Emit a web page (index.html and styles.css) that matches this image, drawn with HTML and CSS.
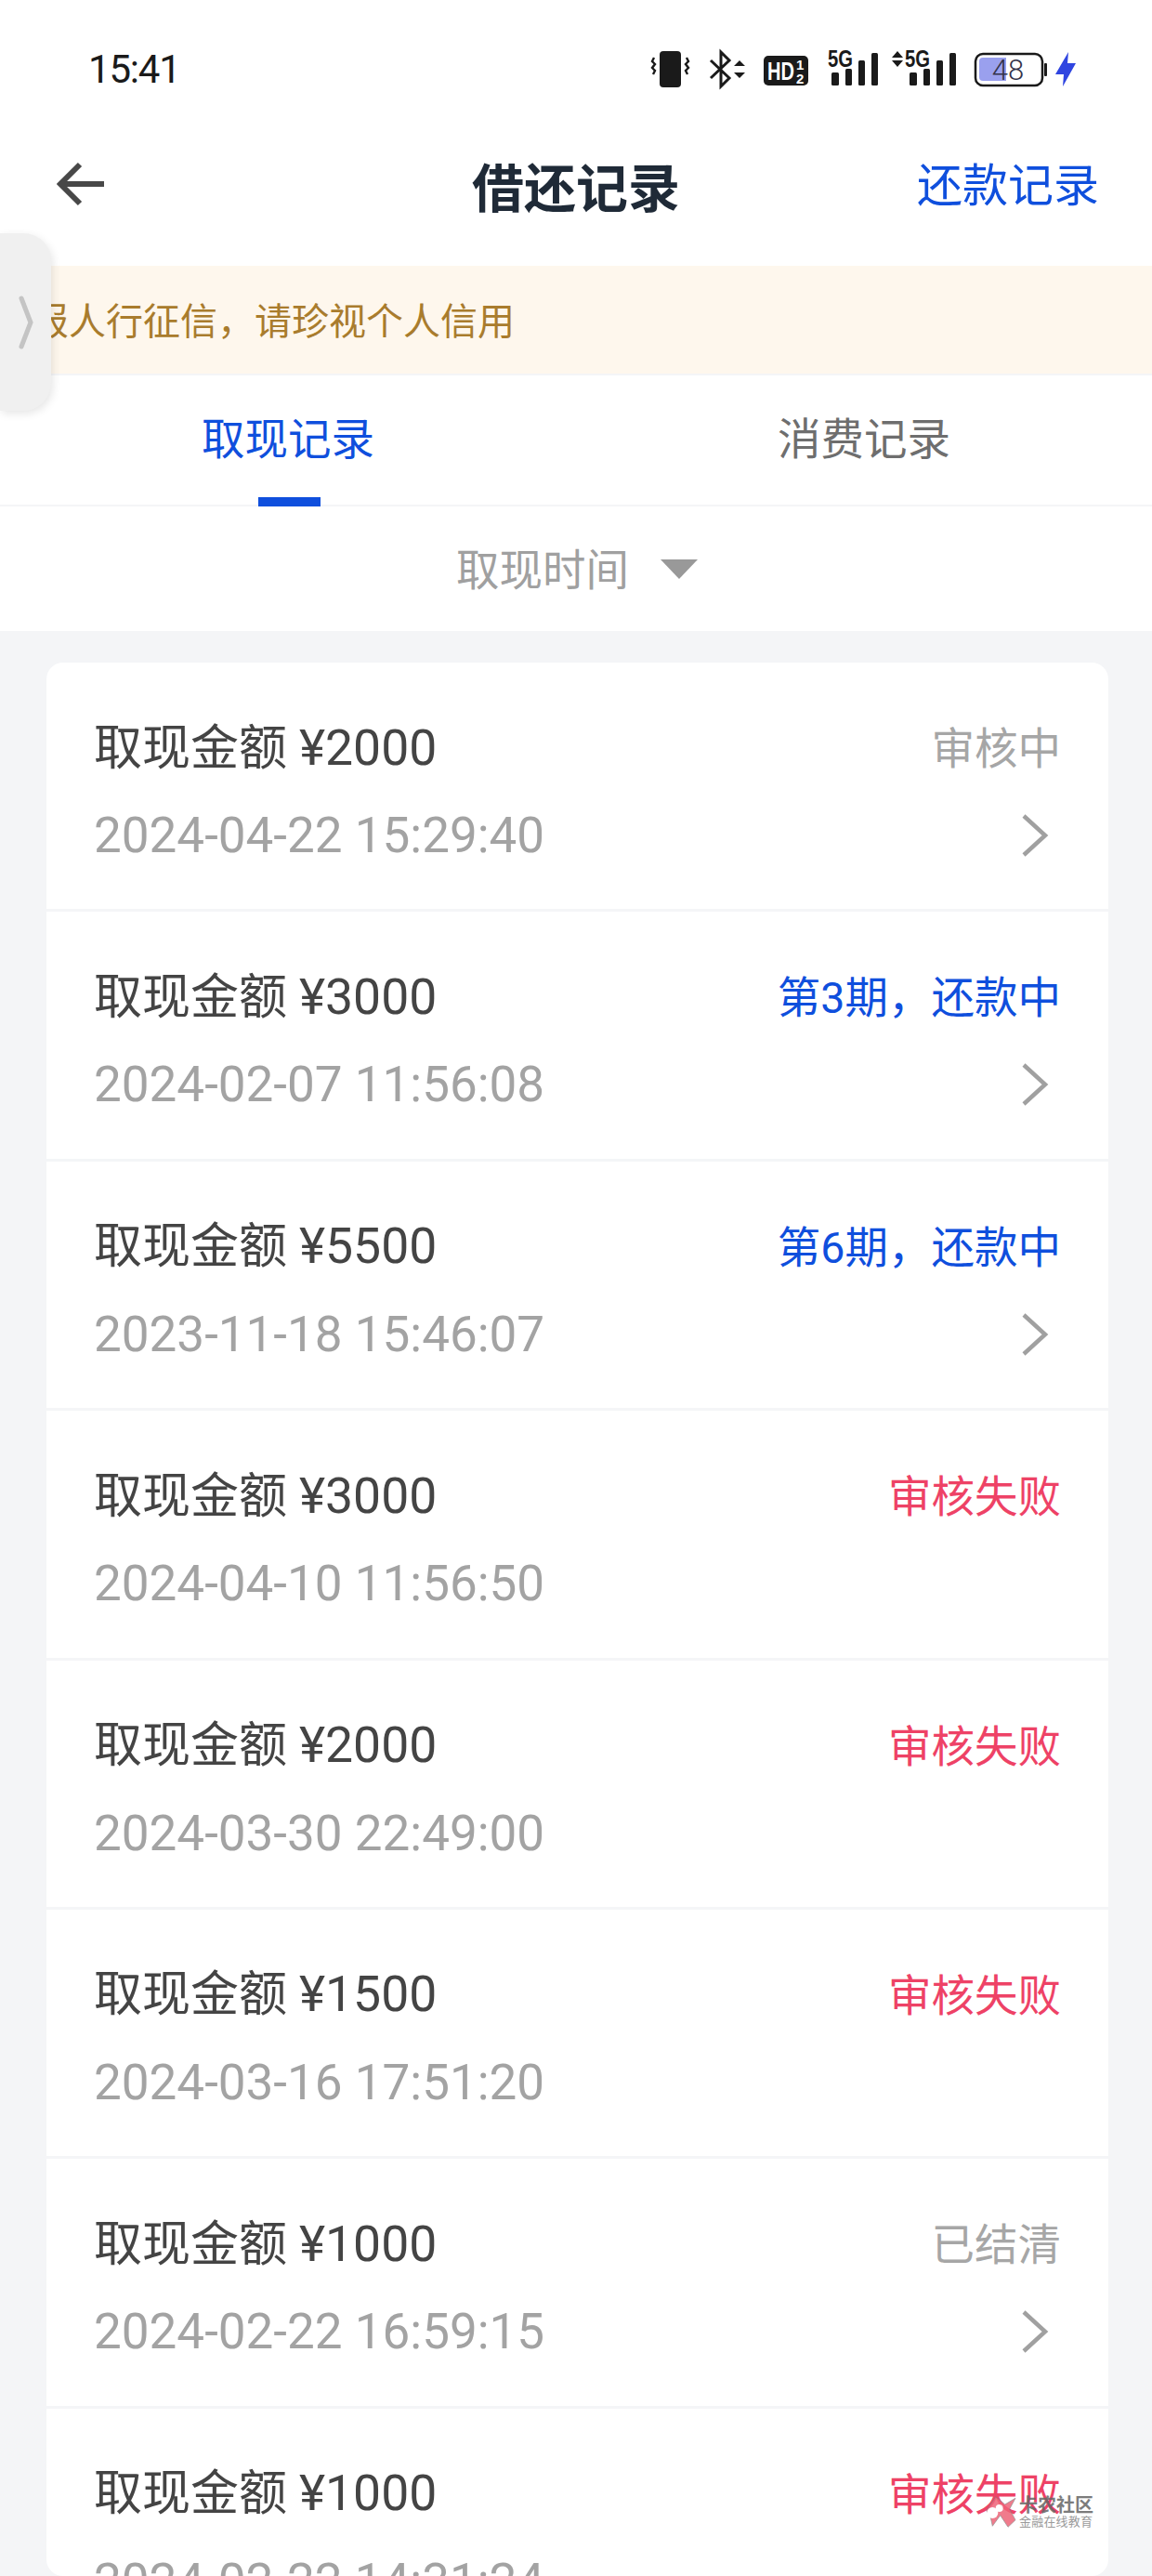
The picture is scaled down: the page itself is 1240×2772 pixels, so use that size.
FILE: index.html
```html
<!DOCTYPE html>
<html lang="zh-CN">
<head>
    <meta charset="UTF-8">
    <meta name="viewport" content="width=device-width, initial-scale=1.0">
    <title>借还记录</title>
    <link rel="stylesheet" href="styles.css">
</head>
<body>
    <div class="page">
        <div class="status-bar">
            <span class="status-time">15:41</span>
            <svg class="status-icons" width="460" height="64" viewBox="700 44 460 64">
                <rect x="710" y="55" width="23" height="39" rx="4" fill="#1a1a1a"/>
                <path d="M704 62l-2 4 3 3-3 4 3 3-2 4M739 62l2 4-3 3 3 4-3 3 2 4" fill="none" stroke="#1a1a1a" stroke-width="2.4"/>
                <path d="M765 65l20 19-9 9V56l9 9-20 19" fill="none" stroke="#1a1a1a" stroke-width="3"/>
                <path d="M796 65l6 6h-12zM790 78h12l-6 6z" fill="#1a1a1a"/>
                <rect x="822" y="60" width="48" height="32" rx="5" fill="#1a1a1a"/>
                <text class="icon-hd" x="826" y="86" textLength="29" lengthAdjust="spacingAndGlyphs">HD</text>
                <text class="icon-frac" x="857" y="75">1</text>
                <text class="icon-frac" x="857" y="90">2</text>
                <text class="icon-5g" x="891" y="72" textLength="27" lengthAdjust="spacingAndGlyphs">5G</text>
                <rect x="895" y="78" width="8" height="14" rx="1.5" fill="#1a1a1a"/>
                <rect x="910" y="74" width="7" height="18" rx="1.5" fill="#1a1a1a"/>
                <rect x="924" y="65" width="7" height="27" rx="1.5" fill="#1a1a1a"/>
                <rect x="938" y="57" width="7" height="35" rx="1.5" fill="#1a1a1a"/>
                <path d="M966 55l6 7h-12zM960 65h12l-6 7z" fill="#1a1a1a"/>
                <text class="icon-5g" x="974" y="72" textLength="27" lengthAdjust="spacingAndGlyphs">5G</text>
                <rect x="979" y="78" width="8" height="14" rx="1.5" fill="#1a1a1a"/>
                <rect x="994" y="74" width="7" height="18" rx="1.5" fill="#1a1a1a"/>
                <rect x="1008" y="65" width="7" height="27" rx="1.5" fill="#1a1a1a"/>
                <rect x="1022" y="57" width="7" height="35" rx="1.5" fill="#1a1a1a"/>
                <rect x="1050" y="58" width="72" height="34" rx="8" fill="#fff" stroke="#1a1a1a" stroke-width="2.5"/>
                <path d="M1054 66a4 4 0 0 1 4-4h25v25h-25a4 4 0 0 1-4-4z" fill="#9aa0ee"/>
                <rect x="1124" y="68" width="3" height="14" rx="1" fill="#1a1a1a"/>
                <text class="icon-batt" x="1085" y="86">48</text>
                <path d="M1150 56l-14 24h9l-1 13 14-25h-9z" fill="#2f45e0"/>
            </svg>
        </div>

        <div class="nav-bar">
            <svg class="nav-back" width="52" height="48" viewBox="0 0 52 48">
                <path d="M26 3L5 24l21 21M5 24h47" fill="none" stroke="#484848" stroke-width="6"/>
            </svg>
            <h1 class="nav-title">借还记录</h1>
            <a class="nav-link">还款记录</a>
        </div>

        <div class="notice">报人行征信，请珍视个人信用</div>

        <div class="tabs">
            <div class="tab active">取现记录</div>
            <div class="tab">消费记录</div>
        </div>

        <div class="filter">
            <span class="filter-label">取现时间</span>
            <i class="filter-arrow"></i>
        </div>

        <div class="list">
            <div class="row">
                <div class="line"><span class="amount">取现金额 <b>¥2000</b></span><span class="state gray">审核中</span></div>
                <div class="line"><span class="date">2024-04-22 15:29:40</span><svg class="chevron" viewBox="0 0 30 46"><path d="M3 2l23 21L3 44"/></svg></div>
            </div>
            <div class="row">
                <div class="line"><span class="amount">取现金额 <b>¥3000</b></span><span class="state blue">第3期，还款中</span></div>
                <div class="line"><span class="date">2024-02-07 11:56:08</span><svg class="chevron" viewBox="0 0 30 46"><path d="M3 2l23 21L3 44"/></svg></div>
            </div>
            <div class="row">
                <div class="line"><span class="amount">取现金额 <b>¥5500</b></span><span class="state blue">第6期，还款中</span></div>
                <div class="line"><span class="date">2023-11-18 15:46:07</span><svg class="chevron" viewBox="0 0 30 46"><path d="M3 2l23 21L3 44"/></svg></div>
            </div>
            <div class="row">
                <div class="line"><span class="amount">取现金额 <b>¥3000</b></span><span class="state red">审核失败</span></div>
                <div class="line"><span class="date">2024-04-10 11:56:50</span></div>
            </div>
            <div class="row">
                <div class="line"><span class="amount">取现金额 <b>¥2000</b></span><span class="state red">审核失败</span></div>
                <div class="line"><span class="date">2024-03-30 22:49:00</span></div>
            </div>
            <div class="row">
                <div class="line"><span class="amount">取现金额 <b>¥1500</b></span><span class="state red">审核失败</span></div>
                <div class="line"><span class="date">2024-03-16 17:51:20</span></div>
            </div>
            <div class="row">
                <div class="line"><span class="amount">取现金额 <b>¥1000</b></span><span class="state gray">已结清</span></div>
                <div class="line"><span class="date">2024-02-22 16:59:15</span><svg class="chevron" viewBox="0 0 30 46"><path d="M3 2l23 21L3 44"/></svg></div>
            </div>
            <div class="row">
                <div class="line"><span class="amount">取现金额 <b>¥1000</b></span><span class="state red">审核失败</span></div>
                <div class="line"><span class="date">2024-02-22 14:31:24</span></div>
            </div>
        </div>

        <!-- 悬浮侧边把手 -->
        <div class="side-handle">
            <svg width="18" height="60" viewBox="0 0 18 60">
                <path d="M4 4l10 26L4 56" fill="none" stroke="#c4c4c4" stroke-width="5" stroke-linecap="round"/>
            </svg>
        </div>

        <!-- 水印 -->
        <div class="watermark">
            <svg width="34" height="34" viewBox="0 0 34 34">
                <path d="M11.7 0.7L21.7 9 33 2.3 26.7 14 33 25.7 25 33.3 16.7 20.7 8.3 32.3 6 22 1.7 15.7z" fill="#ee6478" stroke="#808080" stroke-width="0.7"/>
                <circle cx="8.3" cy="18" r="6" fill="#fff"/>
                <circle cx="15.7" cy="13" r="4" fill="#fff"/>
            </svg>
            <div class="watermark-text">
                <span class="watermark-name">卡农社区</span>
                <span class="watermark-sub">金融在线教育</span>
            </div>
        </div>
    </div>
</body>
</html>
```

FILE: styles.css
```css
* {
  box-sizing: border-box;
}

html, body {
  margin: 0;
  padding: 0;
}

body {
  background: #f4f5f7;
  font-family: Roboto, 'Noto Sans CJK SC', sans-serif;
}

.page {
  position: relative;
  width: 1240px;
  height: 2772px;
  overflow: hidden;
}

/* 状态栏 */
.status-bar {
  display: flex;
  align-items: flex-start;
  justify-content: space-between;
  height: 130px;
  padding: 0 80px 0 95px;
  background: #fff;
}

.status-time {
  margin-top: 51px;
  font-size: 42px;
  line-height: 48px;
  letter-spacing: -1.2px;
  color: #1a1a1a;
}

.status-icons {
  margin-top: 44px;
}

.icon-hd {
  font: 700 27px 'Liberation Sans', sans-serif;
  fill: #fff;
}

.icon-frac {
  font: 700 15px 'Liberation Sans', sans-serif;
  fill: #fff;
}

.icon-5g {
  font: 700 25px 'Liberation Sans', sans-serif;
  fill: #1a1a1a;
}

.icon-batt {
  font: 300 31px Roboto, sans-serif;
  fill: #33334a;
  text-anchor: middle;
}

/* 顶部导航 */
.nav-bar {
  position: relative;
  display: flex;
  align-items: center;
  justify-content: space-between;
  height: 156px;
  padding: 0 57px 20px 60px;
  background: #fff;
}

.nav-title {
  position: absolute;
  left: 0;
  right: 0;
  margin: 0;
  text-align: center;
  font-size: 56px;
  font-weight: 700;
  color: #1f2a37;
}

.nav-link {
  position: relative;
  margin-bottom: 6px;
  font-size: 49px;
  color: #0f4fdd;
}

/* 提示条 */
.notice {
  height: 116px;
  padding: 5px 0 0 34px;
  line-height: 111px;
  font-size: 40px;
  color: #a97c2d;
  background: #fef7ed;
}

/* 标签页 */
.tabs {
  display: flex;
  height: 143px;
  background: #fff;
  border-top: 2px solid #f4f5f7;
  border-bottom: 2px solid #f4f5f7;
}

.tab {
  position: relative;
  flex: 1;
  padding-top: 16px;
  line-height: 106px;
  text-align: center;
  font-size: 46.5px;
  color: #6e6e6e;
}

.tab.active {
  color: #0f4fdd;
}

.tab.active::after {
  content: '';
  position: absolute;
  left: 278px;
  bottom: -2px;
  width: 67px;
  height: 10px;
  background: #0f4fdd;
}

/* 筛选 */
.filter {
  display: flex;
  align-items: center;
  justify-content: center;
  gap: 34px;
  height: 134px;
  padding-left: 2px;
  font-size: 46.5px;
  color: #a0a0a0;
  background: #fff;
}

.filter-label {
  margin-bottom: 6px;
}

.filter-arrow {
  width: 0;
  height: 0;
  border-left: 20px solid transparent;
  border-right: 20px solid transparent;
  border-top: 21px solid #999;
}

/* 列表 */
.list {
  height: 2059px;
  margin: 34px 47px 0 50px;
  background: #fff;
  border-radius: 18px;
  overflow: hidden;
}

.row {
  height: 268.4px;
  padding: 40px 51px 0;
  border-bottom: 3px solid #f4f5f7;
}

.line {
  display: flex;
  align-items: center;
  justify-content: space-between;
  height: 94px;
}

.line + .line {
  margin-top: 5px;
}

.amount {
  font-size: 52px;
  color: #444;
}

.amount b {
  font-size: 53.5px;
  font-weight: 400;
}

.date {
  font-size: 53px;
  color: #a3a3a3;
}

.state {
  margin-top: 3px;
  font-size: 46.5px;
}

.state.gray {
  color: #a6a6a6;
}

.state.blue {
  color: #0f4fdd;
}

.state.red {
  color: #ee4266;
}

.chevron {
  width: 30px;
  height: 46px;
  margin-right: 13px;
  fill: none;
  stroke: #a0a0a0;
  stroke-width: 4.5;
}

/* 悬浮把手 */
.side-handle {
  position: absolute;
  top: 251px;
  left: 0;
  display: flex;
  align-items: center;
  width: 55px;
  height: 191px;
  padding-left: 19px;
  background: #f0f0f0;
  border-radius: 0 30px 30px 0;
  box-shadow: 2px 3px 10px rgba(0,0,0,0.1);
}

/* 水印 */
.watermark {
  position: absolute;
  left: 1060px;
  top: 2686px;
  display: flex;
  gap: 3px;
  opacity: 0.85;
}

.watermark-text {
  display: flex;
  flex-direction: column;
}

.watermark-name {
  font-size: 20px;
  line-height: 21px;
  font-weight: 700;
  color: #666;
}

.watermark-sub {
  font-size: 13px;
  line-height: 14px;
  letter-spacing: 0.2px;
  color: #8a8a8a;
}
```
